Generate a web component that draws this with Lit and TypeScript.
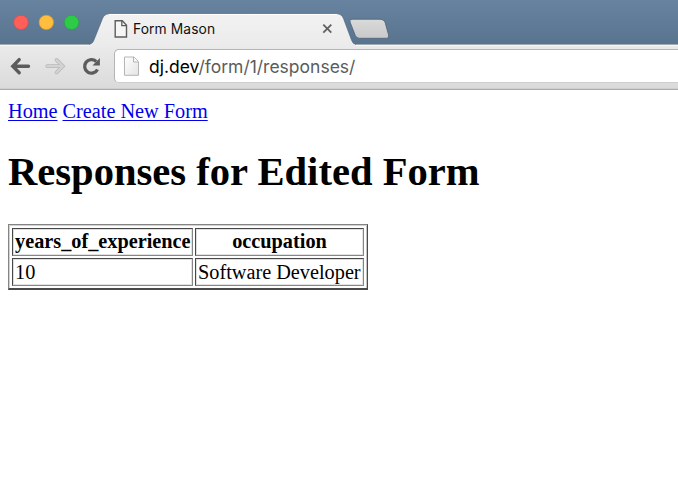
import { LitElement, html, css } from "lit";
import { customElement } from "lit/decorators.js";

@customElement("browser-chrome")
class BrowserChrome extends LitElement {
  static styles = css`
    :host { display: block; position: relative; height: 90px; font-family: Inter, "Liberation Sans", sans-serif; }
    .strip { height: 44px; background: linear-gradient(#67839f, #58748f); }
    .bar { box-sizing: border-box; height: 46px; padding-top: 5px; display: flex; background: linear-gradient(#ebebeb, #dadada); border-bottom: 1px solid #acacac; }
    .nav { width: 114px; flex: none; }
    .omni { box-sizing: border-box; flex: 1; height: 34px; padding-left: 34px; border: 1px solid #b4b4b4; border-bottom-color: #cfcfcf; border-right: 0; border-radius: 5px 0 0 5px; background: #fff; font-size: 17.5px; line-height: 34px; color: #5c5c5c; white-space: nowrap; }
    .host { color: #000; }
    .art { position: absolute; left: 0; top: 0; }
    .title { position: absolute; left: 133px; top: 20px; font-size: 13.8px; line-height: 18px; letter-spacing: 0.1px; color: #111; white-space: nowrap; }
  `;
  render() {
    return html`
      <div class="strip"></div>
      <div class="bar">
        <div class="nav"></div>
        <div class="omni"><span class="host">dj.dev</span>/form/1/responses/</div>
      </div>
      <svg class="art" width="678" height="90" viewBox="0 0 678 90">
        <defs>
          <linearGradient id="tab" x2="0" y2="1"><stop stop-color="#f2f2f2" /><stop offset="1" stop-color="#ebebeb" /></linearGradient>
          <linearGradient id="plus" x2="0" y2="1"><stop stop-color="#dadada" /><stop offset="1" stop-color="#c9c9c9" /></linearGradient>
          <linearGradient id="page" x2="1" y2="1"><stop stop-color="#fff" /><stop offset="1" stop-color="#e4e4e4" /></linearGradient>
        </defs>
        <path d="M0 44.5H678" stroke="#a2a9af" />
        <path d="M0 45.5H678" stroke="#f7f7f7" />
        <path d="M90 46.5V44Q92.500 43.500 93.500 41L102.500 18.500Q104.500 13.800 109 13.800H337Q341.500 13.800 343.500 18.500L351.500 40Q353 44 355 44V46.500Z" fill="url(#tab)" />
        <path d="M89 44.300Q92.300 44 93.500 41L102.500 18.500Q104.500 13.800 109 13.800H337Q341.500 13.800 343.500 18.500L351.500 40Q353 44.300 356 44.300" fill="none" stroke="#53687d" stroke-width=".7" />
        <path d="M109 14.500H337" stroke="#fff" />
        <path d="M352 19.200H380Q383.500 19.200 385 22L388.600 35Q389.400 38.300 386.500 38.300H359.500Q356.500 38.300 355.300 35.500L350 22Q349 19.200 352 19.200Z" fill="url(#plus)" stroke="#53687d" stroke-width=".9" />
        <circle cx="21" cy="22.400" r="7.200" fill="#ff5f59" stroke="#d94d4b" stroke-width=".7" />
        <circle cx="46.300" cy="22.400" r="7.200" fill="#ffbe3e" stroke="#d79b36" stroke-width=".7" />
        <circle cx="71.600" cy="22.400" r="7.200" fill="#2dcb48" stroke="#2aa43f" stroke-width=".7" />
        <path d="M28.500 66.200H13M19.200 59.600L12.800 66.200L19.200 72.800" fill="none" stroke="#5c5c5c" stroke-width="3.400" stroke-linecap="round" stroke-linejoin="miter" />
        <path d="M47.300 66.200H62.500M56.600 59.900L62.800 66.200L56.600 72.500" fill="none" stroke="#b9b9b9" stroke-width="3.800" stroke-linecap="round" />
        <path d="M47.300 66.200H62.500M56.600 59.900L62.800 66.200L56.600 72.500" fill="none" stroke="#d3d3d3" stroke-width="2.200" stroke-linecap="round" />
        <path d="M96.200 61.500A6.800 6.800 0 1 0 97.500 69.500" fill="none" stroke="#5c5c5c" stroke-width="3.300" />
        <path d="M99.900 58V65.500H92.500Z" fill="#5c5c5c" />
        <path d="M115.200 20.700H122.300L126.500 25.200V37H115.200Z" fill="#f5f5f5" stroke="#5d5d5d" stroke-width="1.400" />
        <path d="M121.800 20.700V25.700H126.500" fill="none" stroke="#5d5d5d" stroke-width="1.300" />
        <path d="M124.500 57H134L138.500 61.500V75.300H124.500Z" fill="url(#page)" stroke="#b5b5b5" />
        <path d="M133.500 57V62H138.500" fill="#f7f7f7" stroke="#b5b5b5" />
        <path d="M323.300 24.700L331.300 32.700M331.300 24.700L323.300 32.700" stroke="#606060" stroke-width="1.800" />
        <path d="M0 88.500H678" stroke="#cfcfcf" />
      </svg>
      <div class="title">Form Mason</div>
    `;
  }
}

@customElement("app-root")
class AppRoot extends LitElement {
  static styles = css`
    :host { display: block; height: 500px; overflow: hidden; background: #fff; color: #000; font: 20.28px/23px "Liberation Serif", serif; }
    .page { padding: 10px 8px; }
    .links { display: flex; gap: 5px; height: 23px; }
    a { color: #0000ee; text-decoration: underline; text-decoration-thickness: 1px; text-underline-offset: 2px; white-space: nowrap; }
    h1 { margin: 25px 0 29px; font-size: 40.6px; line-height: 47px; white-space: nowrap; }
    .table { box-sizing: border-box; width: 360px; height: 66px; display: grid; grid-template-columns: 181px 169px; grid-template-rows: 28px 28px; gap: 2px; padding: 3px; border: 1px solid; border-color: #858585 #4a4a4a #4a4a4a #858585; border-bottom-width: 2px; box-shadow: inset 1px 1px #d2d2d2, inset -1px 0 #c4c4c4; }
    .cell { box-sizing: border-box; padding: 0 2px; line-height: 26px; border: 1px solid; border-color: #484848 #868686 #868686 #484848; box-shadow: inset 1px 1px #dedede, inset -1px -1px #e2e2e2; white-space: nowrap; }
    .head { font-weight: bold; text-align: center; line-height: 25px; }
  `;
  render() {
    return html`
      <browser-chrome></browser-chrome>
      <div class="page">
        <div class="links"><a href="#">Home</a><a href="#">Create New Form</a></div>
        <h1>Responses for Edited Form</h1>
        <div class="table">
          <div class="cell head">years_of_experience</div>
          <div class="cell head">occupation</div>
          <div class="cell">10</div>
          <div class="cell">Software Developer</div>
        </div>
      </div>
    `;
  }
}
